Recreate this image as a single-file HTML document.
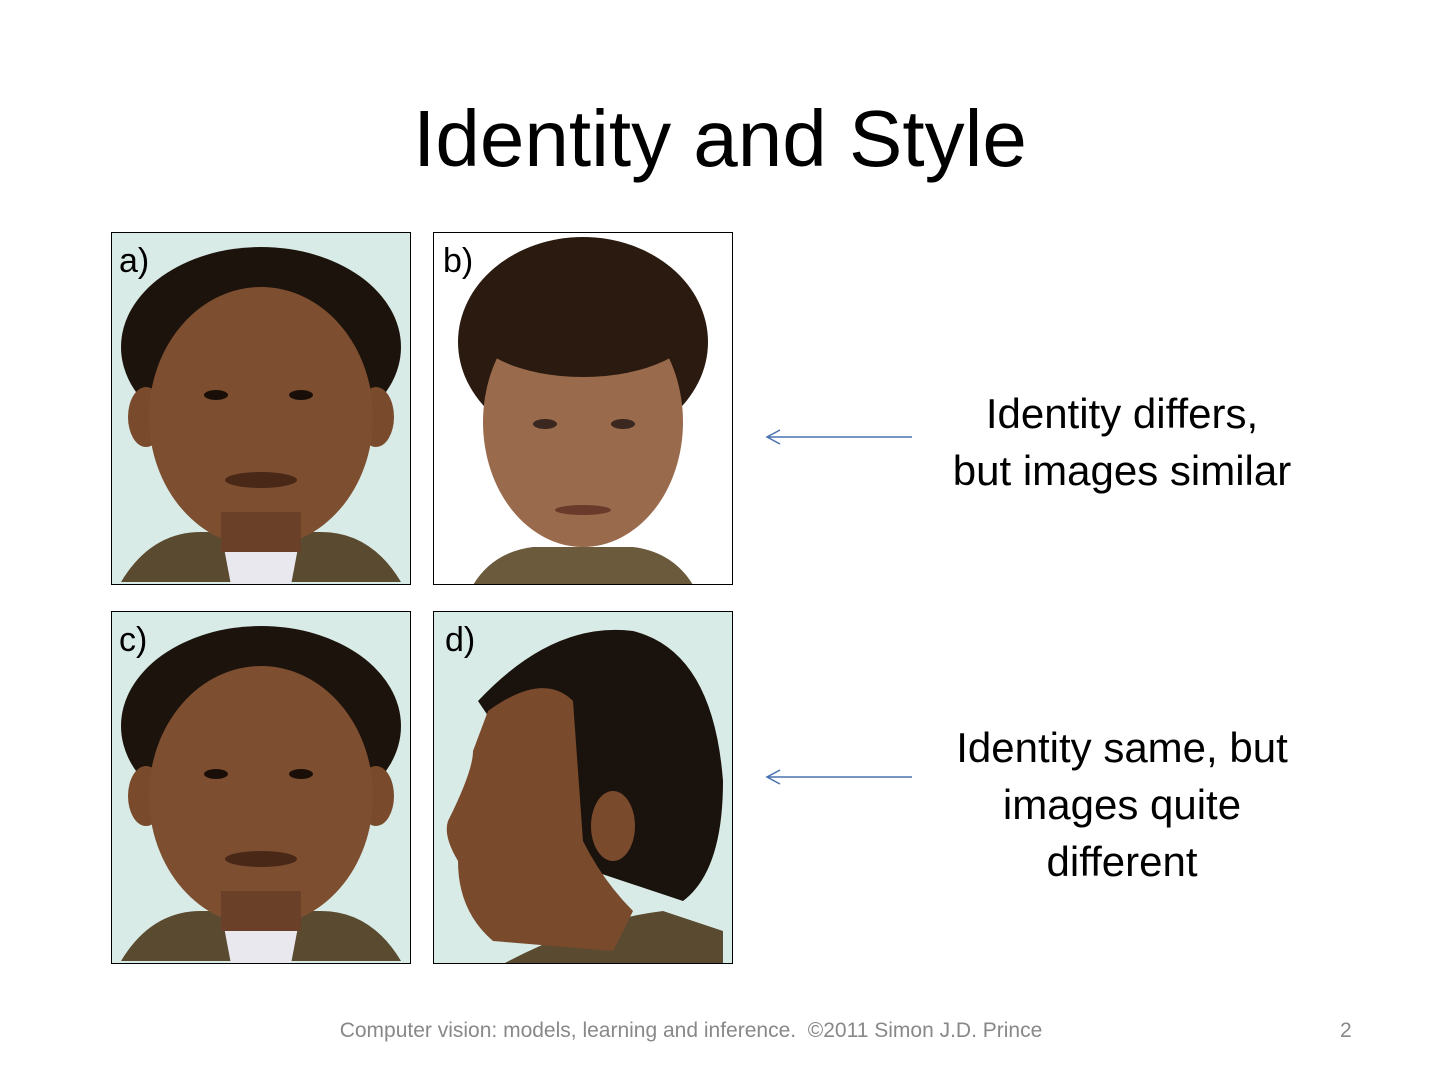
<!DOCTYPE html>
<html><head><meta charset="utf-8"><style>
html,body{margin:0;padding:0;background:#fff;width:1440px;height:1080px;overflow:hidden;position:relative;font-family:"Liberation Sans",sans-serif}
.t{position:absolute;left:0;width:1440px;top:93px;text-align:center;font-size:80px;color:#000}
.r{position:absolute;left:872px;width:500px;text-align:center;font-size:42px;line-height:57px;color:#000}
.f{position:absolute;top:1019px;font-size:21px;color:#888}
svg.p{position:absolute}
</style></head><body>
<div class="t">Identity and Style</div>

<svg class="p" style="left:111px;top:232px" width="300" height="353" viewBox="0 0 300 353">
<rect width="300" height="353" fill="#d9ebe6"/>
<path d="M10 350 Q40 300 90 300 L210 300 Q260 300 290 350Z" fill="#5a4a30"/>
<path d="M110 300 L190 300 L180 353 L120 353Z" fill="#e8e8ee"/>
<ellipse cx="150" cy="115" rx="140" ry="100" fill="#1c130d"/>
<ellipse cx="35" cy="185" rx="18" ry="30" fill="#7a4a2c"/>
<ellipse cx="265" cy="185" rx="18" ry="30" fill="#7a4a2c"/>
<ellipse cx="150" cy="185" rx="112" ry="130" fill="#7e4e30"/>
<rect x="110" y="280" width="80" height="40" fill="#6a4028"/>
<ellipse cx="105" cy="163" rx="12" ry="5" fill="#1a0f08"/><ellipse cx="190" cy="163" rx="12" ry="5" fill="#1a0f08"/>
<ellipse cx="150" cy="248" rx="36" ry="8" fill="#4a2818"/>
<text x="8" y="40" font-size="34" font-family="Liberation Sans">a)</text>
<rect x=".5" y=".5" width="299" height="352" fill="none" stroke="#000"/></svg>

<svg class="p" style="left:433px;top:232px" width="300" height="353" viewBox="0 0 300 353">
<rect width="300" height="353" fill="#fff"/>
<path d="M40 353 Q60 320 100 315 L200 315 Q240 320 260 353Z" fill="#6b5a3c"/>
<ellipse cx="150" cy="110" rx="125" ry="105" fill="#2a1a10"/>
<ellipse cx="150" cy="190" rx="100" ry="125" fill="#9a6a4c"/>
<ellipse cx="150" cy="90" rx="115" ry="55" fill="#2a1a10"/>
<ellipse cx="112" cy="192" rx="12" ry="5" fill="#3a2820"/><ellipse cx="190" cy="192" rx="12" ry="5" fill="#3a2820"/>
<ellipse cx="150" cy="278" rx="28" ry="5" fill="#6a3a2a"/>
<text x="10" y="40" font-size="34" font-family="Liberation Sans">b)</text>
<rect x=".5" y=".5" width="299" height="352" fill="none" stroke="#000"/></svg>

<svg class="p" style="left:111px;top:611px" width="300" height="353" viewBox="0 0 300 353">
<rect width="300" height="353" fill="#d9ebe6"/>
<path d="M10 350 Q40 300 90 300 L210 300 Q260 300 290 350Z" fill="#5a4a30"/>
<path d="M110 300 L190 300 L180 353 L120 353Z" fill="#e8e8ee"/>
<ellipse cx="150" cy="115" rx="140" ry="100" fill="#1c130d"/>
<ellipse cx="35" cy="185" rx="18" ry="30" fill="#7a4a2c"/>
<ellipse cx="265" cy="185" rx="18" ry="30" fill="#7a4a2c"/>
<ellipse cx="150" cy="185" rx="112" ry="130" fill="#7e4e30"/>
<rect x="110" y="280" width="80" height="40" fill="#6a4028"/>
<ellipse cx="105" cy="163" rx="12" ry="5" fill="#1a0f08"/><ellipse cx="190" cy="163" rx="12" ry="5" fill="#1a0f08"/>
<ellipse cx="150" cy="248" rx="36" ry="8" fill="#4a2818"/>
<text x="8" y="40" font-size="34" font-family="Liberation Sans">c)</text>
<rect x=".5" y=".5" width="299" height="352" fill="none" stroke="#000"/></svg>

<svg class="p" style="left:433px;top:611px" width="300" height="353" viewBox="0 0 300 353">
<rect width="300" height="353" fill="#d9ebe6"/>
<path d="M70 353 Q150 310 230 300 L290 320 L290 353Z" fill="#5a4a30"/>
<path d="M45 90 Q120 10 200 20 Q280 40 290 170 Q290 260 250 290 L160 260 Z" fill="#1a120c"/>
<path d="M55 100 Q110 60 140 90 L150 230 Q170 270 200 300 L180 340 Q120 335 60 330 Q25 300 25 250 Q10 225 15 210 Q40 160 40 140 Z" fill="#7a4a2c"/>
<ellipse cx="180" cy="215" rx="22" ry="35" fill="#7a4a2c"/>
<text x="12" y="40" font-size="34" font-family="Liberation Sans">d)</text>
<rect x=".5" y=".5" width="299" height="352" fill="none" stroke="#000"/></svg>

<svg class="p" style="left:760px;top:425px" width="160" height="360">
<g stroke="#4a72b0" stroke-width="1.5" fill="none">
<path d="M7 12 L152 12 M20 5 L7 12 L20 19"/>
<path d="M7 352 L152 352 M20 345 L7 352 L20 359"/>
</g></svg>

<div class="r" style="top:385px">Identity differs,<br>but images similar</div>
<div class="r" style="top:719px">Identity same, but<br>images quite<br>different</div>

<div class="f" style="left:0;width:1382px;text-align:center">Computer vision: models, learning and inference.&nbsp; ©2011 Simon J.D. Prince</div>
<div class="f" style="left:1340px">2</div>
</body></html>
